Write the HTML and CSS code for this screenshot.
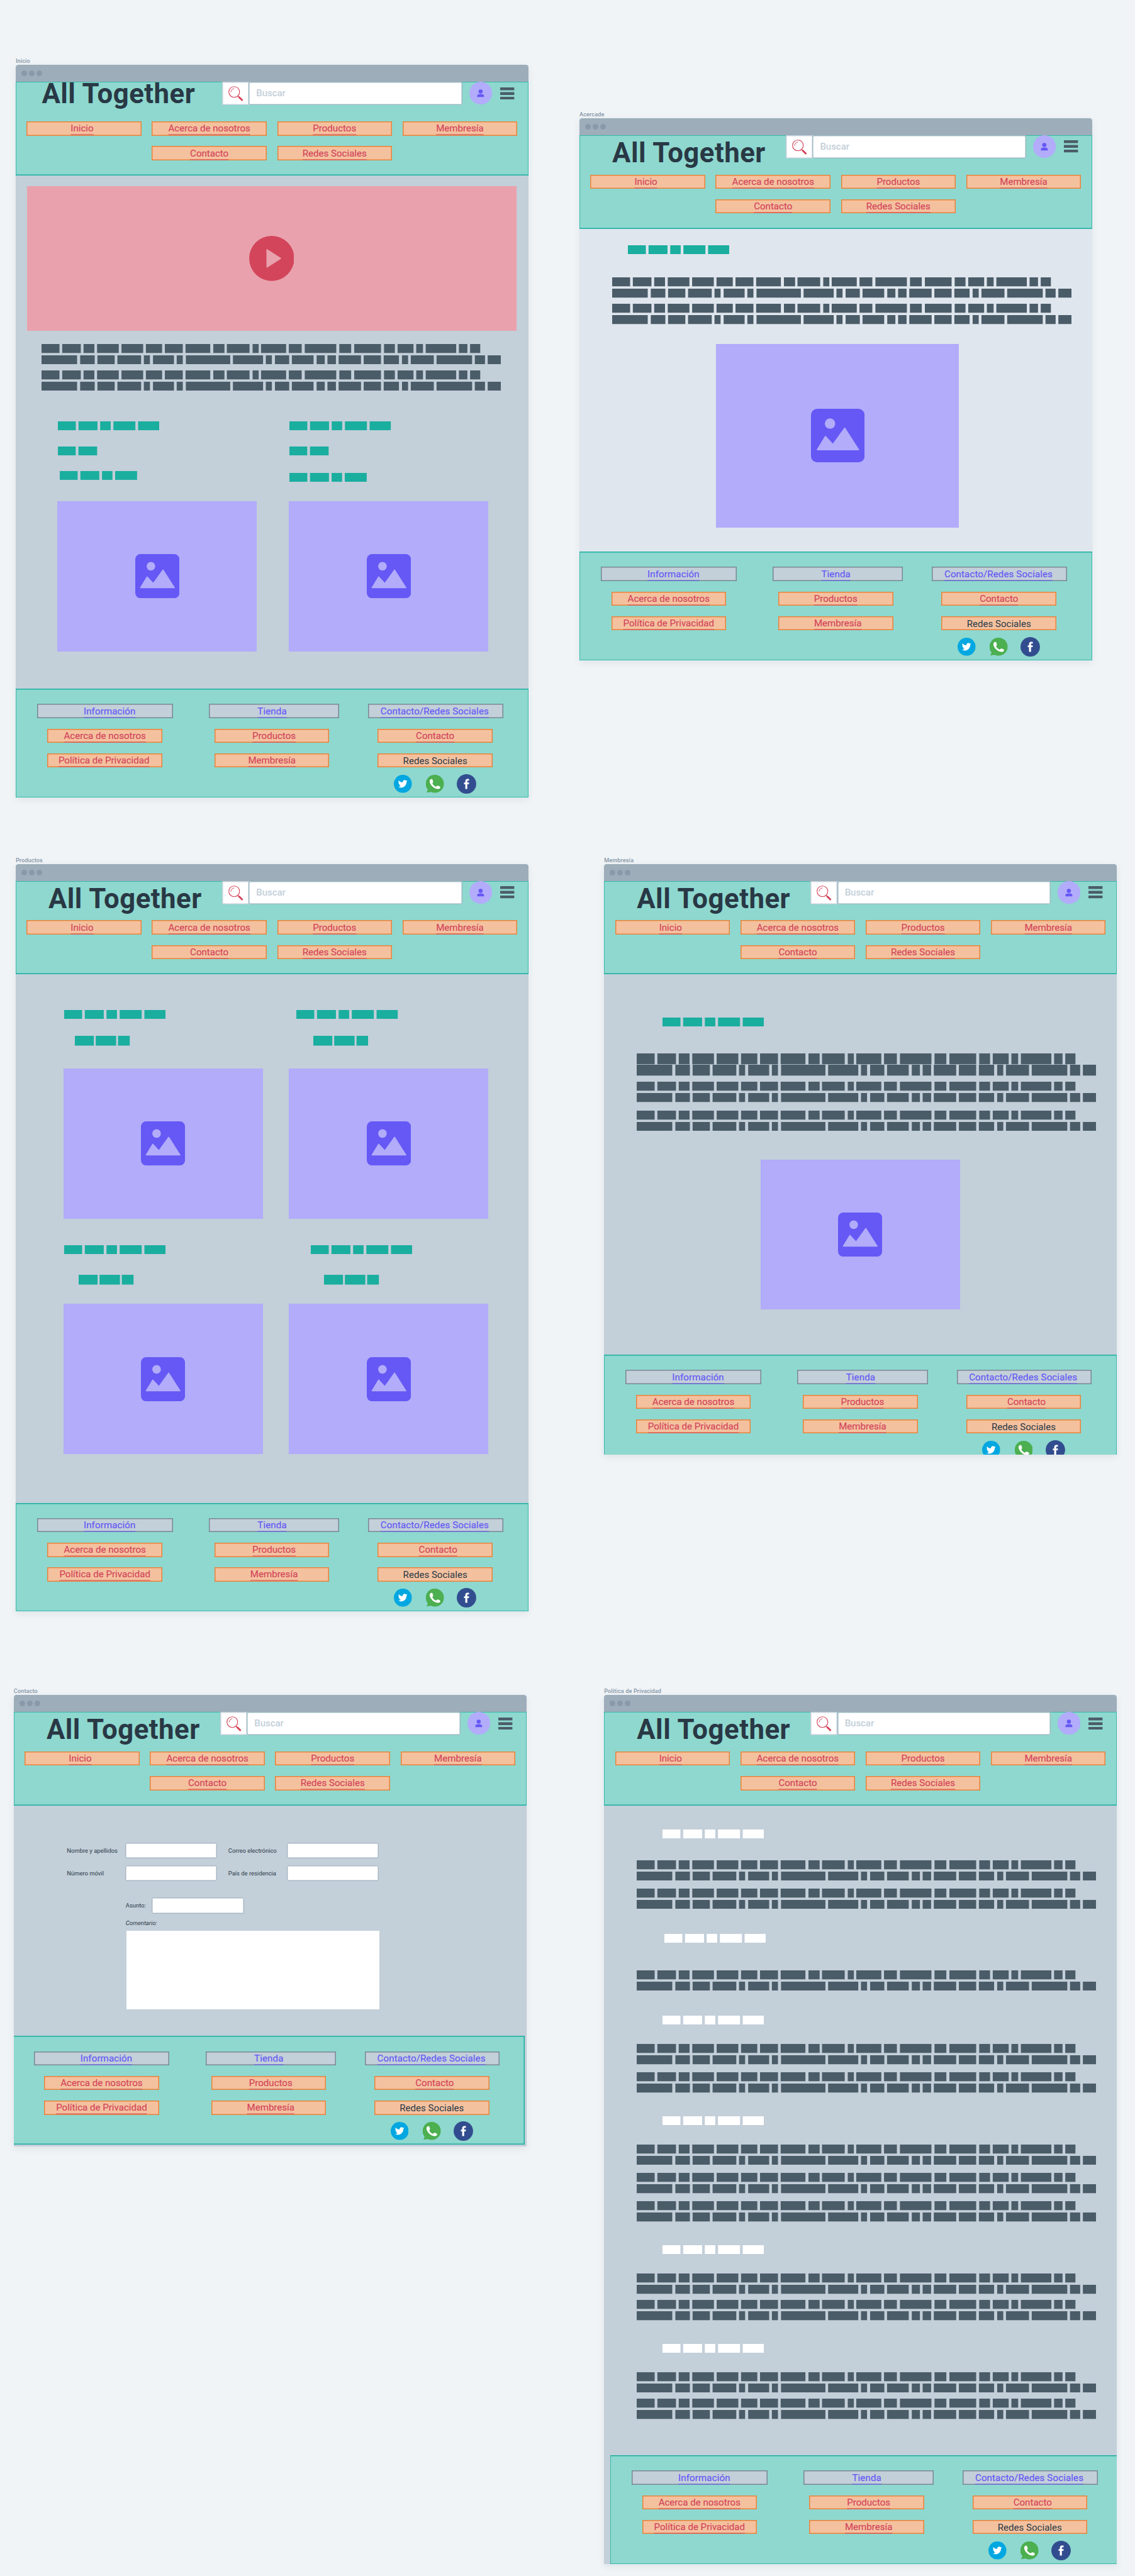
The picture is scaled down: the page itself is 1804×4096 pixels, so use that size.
FILE: index.html
```html
<!DOCTYPE html>
<html lang="es">
<head>
<meta charset="utf-8">
<title>All Together</title>
<link rel="stylesheet" href="styles.css">
</head>
<body>
<svg class="defs" width="0" height="0" aria-hidden="true">
  <symbol id="para" viewBox="0 0 1356 43" preserveAspectRatio="none">
    <g fill="none" stroke="currentColor" stroke-width="19">
      <path d="M0 9.500H1295" stroke-dasharray="53 8 55 8 32 8 64 8 64 8 48 8 53 8 73 9 33 7 67 9 18 7 74 8 38 9 93 9 35 9 79 9 32 8 47 8 20 8 90 8 25 8 30"/>
      <path d="M0 33.500H1356" stroke-dasharray="105 9 43 8 51 8 70 8 18 9 62 8 18 9 131 8 89 8 18 9 42 8 64 9 24 8 25 8 66 8 51 8 45 9 18 8 68 8 105 8 30 8 39"/>
    </g>
  </symbol>
  <symbol id="para-tall" viewBox="0 0 1356 47" preserveAspectRatio="none">
    <g fill="none" stroke="currentColor" stroke-width="23">
      <path d="M0 11.500H1295" stroke-dasharray="53 8 55 8 32 8 64 8 64 8 48 8 53 8 73 9 33 7 67 9 18 7 74 8 38 9 93 9 35 9 79 9 32 8 47 8 20 8 90 8 25 8 30"/>
      <path d="M0 35.500H1356" stroke-dasharray="105 9 43 8 51 8 70 8 18 9 62 8 18 9 131 8 89 8 18 9 42 8 64 9 24 8 25 8 66 8 51 8 45 9 18 8 68 8 105 8 30 8 39"/>
    </g>
  </symbol>
  <symbol id="words5" viewBox="0 0 300 19" preserveAspectRatio="none">
    <path d="M0 9.500H300" fill="none" stroke="currentColor" stroke-width="19" stroke-dasharray="53 8 56 8 31 8 65 8 63"/>
  </symbol>
  <symbol id="words4" viewBox="0 0 229 19" preserveAspectRatio="none">
    <path d="M0 9.500H229" fill="none" stroke="currentColor" stroke-width="19" stroke-dasharray="53 8 56 8 31 8 65"/>
  </symbol>
  <symbol id="words2" viewBox="0 0 117 19" preserveAspectRatio="none">
    <path d="M0 9.500H117" fill="none" stroke="currentColor" stroke-width="19" stroke-dasharray="53 8 56"/>
  </symbol>
  <symbol id="words3" viewBox="0 0 116 21" preserveAspectRatio="none">
    <path d="M0 10.500H116" fill="none" stroke="currentColor" stroke-width="21" stroke-dasharray="40 4 43 4 25"/>
  </symbol>
  <symbol id="picture" viewBox="0 0 93 93">
    <rect width="93" height="93" rx="11" fill="#6558f5"/>
    <circle cx="33" cy="25.700" r="9" fill="#b2acfa"/>
    <path d="M11 71 25 48 38 62 58.500 33.500 82.500 71Z" fill="#b2acfa" stroke="#b2acfa" stroke-width="2" stroke-linejoin="round"/>
  </symbol>
  <symbol id="lens" viewBox="0 0 57 48">
    <circle cx="25.500" cy="21" r="11.300" fill="none" stroke="#d3455b" stroke-width="1.500"/>
    <path d="M18.500 21.500A7.500 7.500 0 0 1 25.500 14" fill="none" stroke="#d3455b" stroke-width="1.300"/>
    <path d="M33 29.500 35.500 32" stroke="#d3455b" stroke-width="1.500"/>
    <path d="M35.800 32 42 38" stroke="#d3455b" stroke-width="4" stroke-linecap="round"/>
  </symbol>
  <symbol id="person" viewBox="0 0 48 48">
    <circle cx="24" cy="24" r="24" fill="#b2acfa"/>
    <circle cx="23.700" cy="20.500" r="4.300" fill="#6558f5"/>
    <path d="M16.500 32v-2.200c0-2.700 2.500-3.800 7.200-3.800s7.200 1.100 7.200 3.800V32z" fill="#6558f5"/>
  </symbol>
  <symbol id="menu" viewBox="0 0 30 26">
    <path d="M0 0h30v6H0zM0 10h30v6H0zM0 20h30v6H0z" fill="#4b5c69"/>
  </symbol>
  <symbol id="twitter" viewBox="0 0 38 38">
    <circle cx="19" cy="19" r="19" fill="#00a7e1"/>
    <path transform="translate(9 9.300) scale(.815)" fill="#fff" d="M23.953 4.570a10 10 0 01-2.825.775 4.958 4.958 0 002.163-2.723c-.951.555-2.005.959-3.127 1.184a4.920 4.920 0 00-8.384 4.482C7.690 8.095 4.067 6.130 1.640 3.162a4.822 4.822 0 00-.666 2.475c0 1.710.870 3.213 2.188 4.096a4.904 4.904 0 01-2.228-.616v.060a4.923 4.923 0 003.946 4.827 4.996 4.996 0 01-2.212.085 4.936 4.936 0 004.604 3.417 9.867 9.867 0 01-6.102 2.105c-.390 0-.779-.023-1.170-.067a13.995 13.995 0 007.557 2.209c9.053 0 13.998-7.496 13.998-13.985 0-.210 0-.420-.015-.630A9.935 9.935 0 0024 4.590z"/>
  </symbol>
  <symbol id="whatsapp" viewBox="0 0 38 38">
    <path d="M19 0a19 19 0 1 1-8.500 36L1.300 37.500 4 31A19 19 0 0 1 19 0z" fill="#4caf50"/>
    <path d="M8.800 10.500C10.300 8.500 13.500 8.800 14 10.500L15.200 14.300C15.600 16 14 17 13.600 18 14.500 21 18 24.300 21 25.200 22.200 24.300 23.500 22.400 25.200 22.800L28.800 24.200C31 25.300 30.500 28 28.500 29.200 25 31.300 18 29 13.500 24.500 9 20 6.300 14 8.800 10.500z" fill="#fff"/>
  </symbol>
  <symbol id="facebook" viewBox="0 0 41 41">
    <circle cx="20.500" cy="20.500" r="20.500" fill="#324d8f"/>
    <path d="M18 31V21.300h-2.700v-3.800H18v-2.700c0-3 1.700-4.700 4.600-4.700 1.300 0 2.600.2 3.300.3v3.200h-2c-1.400 0-1.700.7-1.700 1.700v2.200h3.800l-.5 3.800h-3.300V31z" fill="#fff"/>
  </symbol>
</svg>

<div class="board">

  <section class="frame frame-inicio">
    <div class="label">Inicio</div>
    <div class="window">
      <div class="titlebar"><i></i><i></i><i></i></div>
      <header class="header">
        <div class="top">
          <h1>All Together</h1>
          <svg class="lens"><use href="#lens"/></svg>
          <div class="search">Buscar</div>
          <svg class="avatar"><use href="#person"/></svg>
          <svg class="menu"><use href="#menu"/></svg>
        </div>
        <nav class="nav">
          <a class="home">Inicio</a><a>Acerca de nosotros</a><a>Productos</a><a>Membresía</a><a>Contacto</a><a>Redes Sociales</a>
        </nav>
      </header>
      <main class="main">
        <div class="video"><svg viewBox="0 0 95 95"><circle cx="47.500" cy="47.500" r="47.500" fill="#d3455b"/><path d="M37.500 29 66.500 47.500 37.500 66Z" fill="#e9a2ad" stroke="#e9a2ad" stroke-width="2" stroke-linejoin="round"/></svg></div>
        <div class="text"><svg class="para"><use href="#para"/></svg><svg class="para"><use href="#para"/></svg></div>
        <div class="columns">
          <div class="column">
            <svg class="words5 first"><use href="#words5"/></svg>
            <svg class="words2 second"><use href="#words2"/></svg>
            <svg class="words4 third"><use href="#words4"/></svg>
            <div class="image"><svg><use href="#picture"/></svg></div>
          </div>
          <div class="column right">
            <svg class="words5 first"><use href="#words5"/></svg>
            <svg class="words2 second"><use href="#words2"/></svg>
            <svg class="words4 third"><use href="#words4"/></svg>
            <div class="image"><svg><use href="#picture"/></svg></div>
          </div>
        </div>
      </main>
      <footer class="footer">
        <div class="group info"><a class="head">Información</a><a>Acerca de nosotros</a><a class="privacy">Política de Privacidad</a></div>
        <div class="group shop"><a class="head">Tienda</a><a class="products">Productos</a><a class="member">Membresía</a></div>
        <div class="group social"><a class="head">Contacto/Redes Sociales</a><a class="contact">Contacto</a><span class="plain">Redes Sociales</span>
          <div class="icons"><svg><use href="#twitter"/></svg><svg><use href="#whatsapp"/></svg><svg class="fb"><use href="#facebook"/></svg></div></div>
      </footer>
    </div>
  </section>

  <section class="frame frame-acerca">
    <div class="label">Acercade</div>
    <div class="window">
      <div class="titlebar"><i></i><i></i><i></i></div>
      <header class="header">
        <div class="top">
          <h1>All Together</h1>
          <svg class="lens"><use href="#lens"/></svg>
          <div class="search">Buscar</div>
          <svg class="avatar"><use href="#person"/></svg>
          <svg class="menu"><use href="#menu"/></svg>
        </div>
        <nav class="nav">
          <a class="home">Inicio</a><a>Acerca de nosotros</a><a>Productos</a><a>Membresía</a><a>Contacto</a><a>Redes Sociales</a>
        </nav>
      </header>
      <main class="main">
        <svg class="words5 heading"><use href="#words5"/></svg>
        <div class="text"><svg class="para"><use href="#para"/></svg><svg class="para"><use href="#para"/></svg></div>
        <div class="image"><svg><use href="#picture"/></svg></div>
      </main>
      <footer class="footer">
        <div class="group info"><a class="head">Información</a><a>Acerca de nosotros</a><a class="privacy">Política de Privacidad</a></div>
        <div class="group shop"><a class="head">Tienda</a><a class="products">Productos</a><a class="member">Membresía</a></div>
        <div class="group social"><a class="head">Contacto/Redes Sociales</a><a class="contact">Contacto</a><span class="plain">Redes Sociales</span>
          <div class="icons"><svg><use href="#twitter"/></svg><svg><use href="#whatsapp"/></svg><svg class="fb"><use href="#facebook"/></svg></div></div>
      </footer>
    </div>
  </section>

  <section class="frame frame-productos">
    <div class="label">Productos</div>
    <div class="window">
      <div class="titlebar"><i></i><i></i><i></i></div>
      <header class="header">
        <div class="top">
          <h1>All Together</h1>
          <svg class="lens"><use href="#lens"/></svg>
          <div class="search">Buscar</div>
          <svg class="avatar"><use href="#person"/></svg>
          <svg class="menu"><use href="#menu"/></svg>
        </div>
        <nav class="nav">
          <a class="home">Inicio</a><a>Acerca de nosotros</a><a>Productos</a><a>Membresía</a><a>Contacto</a><a>Redes Sociales</a>
        </nav>
      </header>
      <main class="main">
        <div class="products-grid">
          <div class="product">
            <svg class="words5"><use href="#words5"/></svg>
            <svg class="words3"><use href="#words3"/></svg>
            <div class="image"><svg><use href="#picture"/></svg></div>
          </div>
          <div class="product right">
            <svg class="words5"><use href="#words5"/></svg>
            <svg class="words3"><use href="#words3"/></svg>
            <div class="image"><svg><use href="#picture"/></svg></div>
          </div>
          <div class="product lower">
            <svg class="words5"><use href="#words5"/></svg>
            <svg class="words3"><use href="#words3"/></svg>
            <div class="image"><svg><use href="#picture"/></svg></div>
          </div>
          <div class="product lower right">
            <svg class="words5"><use href="#words5"/></svg>
            <svg class="words3"><use href="#words3"/></svg>
            <div class="image"><svg><use href="#picture"/></svg></div>
          </div>
        </div>
      </main>
      <footer class="footer">
        <div class="group info"><a class="head">Información</a><a>Acerca de nosotros</a><a class="privacy">Política de Privacidad</a></div>
        <div class="group shop"><a class="head">Tienda</a><a class="products">Productos</a><a class="member">Membresía</a></div>
        <div class="group social"><a class="head">Contacto/Redes Sociales</a><a class="contact">Contacto</a><span class="plain">Redes Sociales</span>
          <div class="icons"><svg><use href="#twitter"/></svg><svg><use href="#whatsapp"/></svg><svg class="fb"><use href="#facebook"/></svg></div></div>
      </footer>
    </div>
  </section>

  <section class="frame frame-membresia">
    <div class="label">Membresía</div>
    <div class="window">
      <div class="titlebar"><i></i><i></i><i></i></div>
      <header class="header">
        <div class="top">
          <h1>All Together</h1>
          <svg class="lens"><use href="#lens"/></svg>
          <div class="search">Buscar</div>
          <svg class="avatar"><use href="#person"/></svg>
          <svg class="menu"><use href="#menu"/></svg>
        </div>
        <nav class="nav">
          <a class="home">Inicio</a><a>Acerca de nosotros</a><a>Productos</a><a>Membresía</a><a>Contacto</a><a>Redes Sociales</a>
        </nav>
      </header>
      <main class="main">
        <svg class="words5 heading"><use href="#words5"/></svg>
        <div class="text"><svg class="para tall"><use href="#para-tall"/></svg><svg class="para"><use href="#para"/></svg><svg class="para last"><use href="#para"/></svg></div>
        <div class="image"><svg><use href="#picture"/></svg></div>
      </main>
      <footer class="footer">
        <div class="group info"><a class="head">Información</a><a>Acerca de nosotros</a><a class="privacy">Política de Privacidad</a></div>
        <div class="group shop"><a class="head">Tienda</a><a class="products">Productos</a><a class="member">Membresía</a></div>
        <div class="group social"><a class="head">Contacto/Redes Sociales</a><a class="contact">Contacto</a><span class="plain">Redes Sociales</span>
          <div class="icons"><svg><use href="#twitter"/></svg><svg><use href="#whatsapp"/></svg><svg class="fb"><use href="#facebook"/></svg></div></div>
      </footer>
    </div>
  </section>

  <section class="frame frame-contacto">
    <div class="label">Contacto</div>
    <div class="window">
      <div class="titlebar"><i></i><i></i><i></i></div>
      <header class="header">
        <div class="top">
          <h1>All Together</h1>
          <svg class="lens"><use href="#lens"/></svg>
          <div class="search">Buscar</div>
          <svg class="avatar"><use href="#person"/></svg>
          <svg class="menu"><use href="#menu"/></svg>
        </div>
        <nav class="nav">
          <a class="home">Inicio</a><a>Acerca de nosotros</a><a>Productos</a><a>Membresía</a><a>Contacto</a><a>Redes Sociales</a>
        </nav>
      </header>
      <main class="main">
        <div class="fields">
          <span>Nombre y apellidos</span><div class="field"></div><span class="second">Correo electrónico</span><div class="field"></div>
          <span>Número móvil</span><div class="field"></div><span class="second">País de residencia</span><div class="field"></div>
        </div>
        <div class="subject"><span>Asunto:</span><div class="field"></div></div>
        <div class="comment">Comentario:</div>
        <div class="textarea"></div>
      </main>
      <footer class="footer">
        <div class="group info"><a class="head">Información</a><a>Acerca de nosotros</a><a class="privacy">Política de Privacidad</a></div>
        <div class="group shop"><a class="head">Tienda</a><a class="products">Productos</a><a class="member">Membresía</a></div>
        <div class="group social"><a class="head">Contacto/Redes Sociales</a><a class="contact">Contacto</a><span class="plain">Redes Sociales</span>
          <div class="icons"><svg><use href="#twitter"/></svg><svg><use href="#whatsapp"/></svg><svg class="fb"><use href="#facebook"/></svg></div></div>
      </footer>
    </div>
  </section>

  <section class="frame frame-politica">
    <div class="label">Política de Privacidad</div>
    <div class="window">
      <div class="titlebar"><i></i><i></i><i></i></div>
      <header class="header">
        <div class="top">
          <h1>All Together</h1>
          <svg class="lens"><use href="#lens"/></svg>
          <div class="search">Buscar</div>
          <svg class="avatar"><use href="#person"/></svg>
          <svg class="menu"><use href="#menu"/></svg>
        </div>
        <nav class="nav">
          <a class="home">Inicio</a><a>Acerca de nosotros</a><a>Productos</a><a>Membresía</a><a>Contacto</a><a>Redes Sociales</a>
        </nav>
      </header>
      <main class="main">
        <div class="clause intro">
          <svg class="words5"><use href="#words5"/></svg>
          <div class="text"><svg class="para"><use href="#para"/></svg><svg class="para"><use href="#para"/></svg></div>
        </div>
        <div class="clause spaced">
          <svg class="words5"><use href="#words5"/></svg>
          <div class="text"><svg class="para"><use href="#para"/></svg></div>
        </div>
        <div class="clause after-spaced">
          <svg class="words5"><use href="#words5"/></svg>
          <div class="text"><svg class="para"><use href="#para"/></svg><svg class="para"><use href="#para"/></svg></div>
        </div>
        <div class="clause">
          <svg class="words5"><use href="#words5"/></svg>
          <div class="text"><svg class="para"><use href="#para"/></svg><svg class="para"><use href="#para"/></svg><svg class="para"><use href="#para"/></svg></div>
        </div>
        <div class="clause tight">
          <svg class="words5"><use href="#words5"/></svg>
          <div class="text"><svg class="para"><use href="#para"/></svg><svg class="para"><use href="#para"/></svg></div>
        </div>
        <div class="clause tight">
          <svg class="words5"><use href="#words5"/></svg>
          <div class="text"><svg class="para"><use href="#para"/></svg><svg class="para"><use href="#para"/></svg></div>
        </div>
      </main>
      <footer class="footer">
        <div class="group info"><a class="head">Información</a><a>Acerca de nosotros</a><a class="privacy">Política de Privacidad</a></div>
        <div class="group shop"><a class="head">Tienda</a><a class="products">Productos</a><a class="member">Membresía</a></div>
        <div class="group social"><a class="head">Contacto/Redes Sociales</a><a class="contact">Contacto</a><span class="plain">Redes Sociales</span>
          <div class="icons"><svg><use href="#twitter"/></svg><svg><use href="#whatsapp"/></svg><svg class="fb"><use href="#facebook"/></svg></div></div>
      </footer>
    </div>
  </section>

</div>
</body>
</html>
```
FILE: styles.css
```css
* { box-sizing: border-box; }
html, body { margin: 0; background: #f0f4f7; }
body { height: 4096px; overflow: hidden; font-family: Roboto, "Liberation Sans", sans-serif; color: #293845; }
.defs { position: absolute; }
svg { display: block; flex: none; }

.board { position: relative; width: 2391px; height: 5430px; zoom: 0.7543; }

/* Frames on the canvas */
.frame { position: absolute; width: 1080px; }
.frame-inicio { left: 33px; top: 121px; }
.frame-acerca { left: 1221px; top: 233px; }
.frame-productos { left: 33px; top: 1805px; }
.frame-membresia { left: 1273px; top: 1805px; }
.frame-contacto { left: 29px; top: 3557px; }
.frame-politica { left: 1273px; top: 3557px; }

.label { height: 16px; line-height: 16px; font-size: 12px; font-weight: 500; letter-spacing: .2px; color: #8494a5; white-space: nowrap; }
.window { border-radius: 6px 6px 0 0; overflow: hidden; background: #c3cfd9; box-shadow: 0 4px 14px rgba(41, 56, 69, .08); }
.titlebar { height: 36px; display: flex; align-items: center; gap: 4px; padding-left: 12px; background: #9dadba; }
.titlebar i { width: 12px; height: 12px; border-radius: 50%; background: #8999a9; }

/* Header */
.header { height: 197px; background: #8ed8cf; box-shadow: inset 0 0 0 1px #1aae9f, inset 0 -2px 0 #1aae9f; }
.top { height: 83px; display: flex; align-items: flex-start; }
h1 { margin: 0; width: 435px; padding: 8px 0 0 69px; font-size: 58px; line-height: 60px; font-weight: 700; letter-spacing: .65px; white-space: nowrap; }
.lens { width: 57px; height: 49px; background: #fff; box-shadow: inset 0 0 0 2px #c3cfd9; }
.search { width: 450px; height: 49px; margin-left: -1px; padding-left: 16px; line-height: 48px; font-size: 20px; font-weight: 500; letter-spacing: -.1px; color: #c3cfd9; background: #fff; border-radius: 4px; box-shadow: inset 0 0 0 2px #9bbac2; }
.avatar { width: 48px; height: 48px; margin-left: 15px; }
.menu { width: 30px; height: 26px; margin: 11px 0 0 17px; }
.nav { display: flex; flex-wrap: wrap; justify-content: center; gap: 22px; padding: 0 23px; }

.nav a, .group a, .plain { display: flex; justify-content: center; align-items: center; width: 242px; height: 30px; font-size: 20px; font-weight: 400; letter-spacing: 0; white-space: nowrap; background: #f4c19f; box-shadow: inset 0 0 0 2px #e8833a; }
.nav a, .group a { color: #d3455b; text-decoration: underline; text-decoration-color: rgba(211, 69, 91, .5); text-decoration-thickness: 2px; text-underline-offset: 5px; text-decoration-skip-ink: none; -webkit-text-stroke: .25px currentColor; }
.nav .home { padding-right: 8px; }

/* Footer */
.footer { height: 229px; display: flex; padding: 32px 0 0 45px; background: #8ed8cf; box-shadow: inset 0 0 0 1px #1aae9f, inset 0 2px 0 #1aae9f; }
.group { display: flex; flex-direction: column; align-items: center; gap: 22px; flex: none; }
.group .head { width: 100%; letter-spacing: .15px; color: #6558f5; background: #c3cfd9; box-shadow: inset 0 0 0 2px #788896; text-decoration-color: rgba(101, 88, 245, .5); }
.info { width: 286px; }
.info .head { padding-left: 20px; }
.shop { width: 275px; margin-left: 76px; align-items: flex-start; }
.shop .head { padding-right: 8px; }
.shop a:not(.head) { margin-left: 12px; }
.social { width: 284px; margin-left: 61px; }
.social .head { padding-right: 4px; }
.products, .member { padding-left: 9px; }
.contact { padding-left: 12px; }
.social .contact, .plain { margin-right: 2px; }
.plain { padding-top: 2px; }
.icons { display: flex; align-items: center; margin-top: -8px; gap: 30px; margin-left: -2px; }
.icons svg { width: 38px; height: 38px; }
.icons .fb { width: 41px; height: 41px; margin-left: -3px; }

/* Placeholder blocks */
.para { width: 968px; height: 43px; color: #4b5c69; }
.para.tall { height: 47px; }
.text { display: flex; flex-direction: column; gap: 13px; margin-left: 69px; }
.words5, .words4, .words3, .words2 { height: 19px; color: #1aae9f; }
.words5 { width: 214px; }
.words4 { width: 163px; }
.words3 { width: 116px; height: 21px; }
.words2 { width: 83px; }
.image { width: 420px; height: 316px; display: flex; align-items: center; justify-content: center; background: #b2acfa; }
.image svg { width: 93px; height: 93px; }
.main { display: flow-root; }

/* Inicio */
.frame-inicio h1 { padding-left: 55px; padding-top: 0; margin-top: -4px; }
.frame-inicio .main { height: 1082px; }
.video { width: 1032px; height: 304px; margin: 23px 0 0 24px; display: flex; align-items: center; justify-content: center; background: #e9a2ad; }
.video svg { width: 95px; height: 95px; margin-right: 2px; }
.frame-inicio .text { margin: 28px 0 0 55px; }
.columns { display: grid; grid-template-columns: 420px 420px; gap: 68px; margin: 65px 0 0 88px; }
.first, .second { margin-left: 1px; }
.second { margin-top: 33px; }
.third { margin: 33px 0 0 5px; }
.column .image { margin-top: 45px; }
.right .third { margin: 37px 0 0 1px; }
.column.right .image { margin-top: 41px; }
.frame-inicio .member, .frame-inicio .contact { padding-left: 0; }
.frame-inicio .privacy { padding-right: 4px; }

/* Acerca de */
.frame-acerca .main { height: 681px; background: #dfe6ed; }
.frame-acerca .heading { margin: 35px 0 0 102px; }
.frame-acerca .text { margin-top: 49px; }
.frame-acerca .image { width: 512px; height: 388px; margin: 41px 0 0 288px; }
.frame-acerca .image svg { width: 113px; height: 113px; }
.frame-acerca .products, .frame-acerca .contact { padding-left: 0; }

/* Productos */
.frame-productos .main { height: 1114px; }
.products-grid { display: grid; grid-template-columns: 420px 420px; column-gap: 55px; margin: 75px 0 0 101px; }
.product .words5 { margin-left: 1px; }
.product .words3 { margin: 36px 0 0 24px; }
.product .image { margin-top: 48px; }
.product.right .words5 { margin-left: 16px; }
.product.right .words3 { margin-left: 51px; }
.product.lower .words5 { margin-top: 56px; }
.product.lower .words3 { margin: 44px 0 0 32px; }
.product.lower .image { margin-top: 40px; }
.product.lower.right .words5 { margin-left: 46px; }
.product.lower.right .words3 { margin-left: 74px; }

/* Membresía */
.frame-membresia .window { height: 1246px; }
.frame-membresia .main { height: 802px; }
.frame-membresia .heading { margin: 91px 0 0 123px; }
.frame-membresia .text { margin-top: 57px; }
.frame-membresia .last { margin-top: 4px; }
.frame-membresia .image { margin: 61px 0 0 330px; }

/* Contacto */
.frame-contacto .window { height: 952px; }
.frame-contacto .main { height: 486px; font-size: 12.500px; }
.frame-contacto .footer { width: 1080px; margin-left: -3px; box-shadow: inset 0 0 0 2px #1aae9f; }
.fields { display: grid; grid-template-columns: 123px 194px 146px 194px; row-gap: 14px; align-items: center; margin: 78px 0 0 112px; }
.fields .second { margin: 0 0 0 23px; }
.field { width: 194px; height: 34px; background: #fff; border-radius: 3px; box-shadow: inset 0 0 0 2px #a9b8c5; }
.subject { display: flex; align-items: center; margin: 34px 0 0 236px; }
.subject span { width: 55px; }
.comment { height: 16px; line-height: 16px; margin: 12px 0 0 236px; font-style: italic; }
.textarea { width: 533px; height: 166px; margin: 8px 0 0 237px; background: #fff; }

/* Política de Privacidad */
.frame-politica .main { height: 1370px; }
.clause .words5 { margin: 49px 0 0 123px; color: #fff; }
.clause .text { margin-top: 41px; gap: 17px; }
.clause.intro .words5 { margin-top: 51px; }
.clause.intro .text { margin-top: 45px; }
.clause.spaced .words5 { margin: 53px 0 0 127px; }
.clause.spaced .text { margin-top: 57px; }
.clause.after-spaced .words5 { margin-top: 53px; }
.clause.tight .text { gap: 13px; }
.clause { display: flow-root; }
.frame-politica .footer { width: 1080px; margin-left: 13px; }
```
